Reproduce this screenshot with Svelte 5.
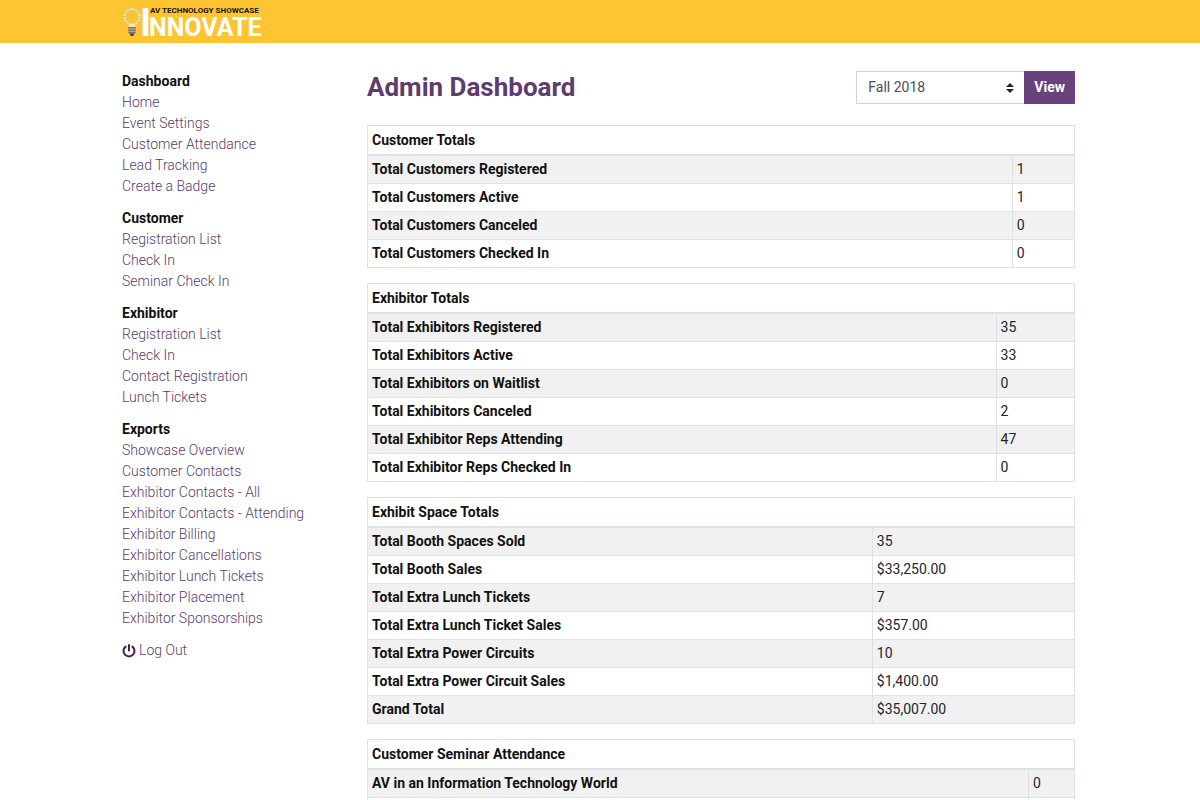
<script>
  const groups = [
    { title: 'Dashboard', links: ['Home', 'Event Settings', 'Customer Attendance', 'Lead Tracking', 'Create a Badge'] },
    { title: 'Customer', links: ['Registration List', 'Check In', 'Seminar Check In'] },
    { title: 'Exhibitor', links: ['Registration List', 'Check In', 'Contact Registration', 'Lunch Tickets'] },
    {
      title: 'Exports',
      links: [
        'Showcase Overview',
        'Customer Contacts',
        'Exhibitor Contacts - All',
        'Exhibitor Contacts - Attending',
        'Exhibitor Billing',
        'Exhibitor Cancellations',
        'Exhibitor Lunch Tickets',
        'Exhibitor Placement',
        'Exhibitor Sponsorships'
      ]
    }
  ];

  // share: width of the label column, in percent of the table
  const tables = [
    {
      title: 'Customer Totals',
      share: 91.2,
      rows: [
        ['Total Customers Registered', '1'],
        ['Total Customers Active', '1'],
        ['Total Customers Canceled', '0'],
        ['Total Customers Checked In', '0']
      ]
    },
    {
      title: 'Exhibitor Totals',
      share: 88.9,
      rows: [
        ['Total Exhibitors Registered', '35'],
        ['Total Exhibitors Active', '33'],
        ['Total Exhibitors on Waitlist', '0'],
        ['Total Exhibitors Canceled', '2'],
        ['Total Exhibitor Reps Attending', '47'],
        ['Total Exhibitor Reps Checked In', '0']
      ]
    },
    {
      title: 'Exhibit Space Totals',
      share: 71.4,
      rows: [
        ['Total Booth Spaces Sold', '35'],
        ['Total Booth Sales', '$33,250.00'],
        ['Total Extra Lunch Tickets', '7'],
        ['Total Extra Lunch Ticket Sales', '$357.00'],
        ['Total Extra Power Circuits', '10'],
        ['Total Extra Power Circuit Sales', '$1,400.00'],
        ['Grand Total', '$35,007.00']
      ]
    },
    {
      title: 'Customer Seminar Attendance',
      share: 93.5,
      rows: [
        ['AV in an Information Technology World', '0'],
        ['', '']
      ]
    }
  ];
</script>

<header class="banner">
  <div class="container">
    <a class="logo" href="#home">
      <svg class="bulb" viewBox="0 0 20 32" aria-hidden="true">
        <circle cx="10" cy="10.500" r="7.500" fill="none" stroke="#e0b64a" stroke-width="3" />
        <circle cx="10" cy="10.500" r="7.500" fill="none" stroke="#fff3c4" stroke-width="2.200" stroke-dasharray="2 .95" />
        <path d="M6.500 18h7l-.6 4H7.100z" fill="#fbe7a6" />
        <path d="M6.300 21h7.400v5.500l-2 2.500H8.300l-2-2.500z" fill="#777267" />
        <path d="M6.300 23h7.400M6.300 25.300h7.400" stroke="#c9c4b4" stroke-width=".8" />
        <path d="M8.500 28h3v2h-3z" fill="#403b31" />
      </svg>
      <svg class="wordmark" viewBox="0 0 120 32" role="img" aria-label="AV Technology Showcase Innovate">
        <text class="initial" x="-2" y="30">I</text>
        <text class="tagline" x="8" y="7">AV TECHNOLOGY SHOWCASE</text>
        <text class="name" x="7" y="30">NNOVATE</text>
      </svg>
    </a>
  </div>
</header>

<div class="container body">
  <nav class="sidebar" aria-label="Admin">
    {#each groups as group}
      <section>
        <h2>{group.title}</h2>
        <ul>
          {#each group.links as link}
            <li><a href="#{link.toLowerCase().replaceAll(' ', '-')}">{link}</a></li>
          {/each}
        </ul>
      </section>
    {/each}
    <a class="logout" href="#logout">
      <svg viewBox="0 0 14 14" aria-hidden="true">
        <path d="M3.600 2.600A5.500 5.500 0 1 0 10.400 2.600M7 1v5.500" fill="none" stroke="currentColor" stroke-width="2" stroke-linecap="round" />
      </svg>
      Log Out
    </a>
  </nav>

  <main>
    <div class="heading">
      <h1>Admin Dashboard</h1>
      <form class="picker" onsubmit={(e) => e.preventDefault()}>
        <div class="select">
          <select aria-label="Event">
            <option>Fall 2018</option>
          </select>
          <svg viewBox="0 0 8 10" aria-hidden="true"><path d="M4 0l4 4H0zM4 10L0 6h8z" fill="#212529" /></svg>
        </div>
        <button type="submit">View</button>
      </form>
    </div>

    {#each tables as table}
      <table>
        <colgroup>
          <col style="width: {table.share}%" />
          <col />
        </colgroup>
        <thead>
          <tr><th colspan="2">{table.title}</th></tr>
        </thead>
        <tbody>
          {#each table.rows as [label, value]}
            <tr>
              <th scope="row">{label}</th>
              <td>{value}</td>
            </tr>
          {/each}
        </tbody>
      </table>
    {/each}
  </main>
</div>

<style>
  :global(body) {
    background: #fff;
    color: #212529;
    font-family: Roboto, sans-serif;
    font-size: 14px;
    line-height: 21px;
  }

  .container {
    box-sizing: border-box;
    max-width: 956px;
    margin: 0 auto;
    padding-right: 3px;
  }

  a {
    color: #5b3a6b;
    text-decoration: none;
  }

  .banner {
    background: #ffc431;
    padding: 6px 0 5px;
  }

  .logo {
    display: flex;
    width: max-content;
  }

  .bulb {
    width: 20px;
    height: 32px;
  }

  .wordmark {
    width: 120px;
    height: 32px;
    overflow: visible;
  }

  .wordmark text {
    font-weight: 700;
  }

  .tagline {
    fill: #17140c;
    font-size: 8px;
  }

  .name {
    fill: #fff;
    font-size: 25px;
  }

  .initial {
    fill: #fff;
    font-size: 38px;
  }

  .body {
    display: flex;
    gap: 24px;
    padding-top: 28px;
  }

  .sidebar {
    flex: 0 0 221px;
    font-weight: 300;
  }

  section {
    margin-bottom: 11px;
  }

  h2 {
    margin: 0;
    color: #111;
    font-size: 14px;
    font-weight: 700;
    line-height: 21px;
  }

  ul {
    margin: 0;
    padding: 0;
    list-style: none;
  }

  .logout {
    display: flex;
    align-items: center;
    gap: 3px;
  }

  .logout svg {
    width: 14px;
    height: 14px;
    color: #43235a;
  }

  main {
    flex: 1;
    min-width: 0;
  }

  .heading {
    display: flex;
    align-items: center;
    justify-content: space-between;
    margin-bottom: 21px;
  }

  h1 {
    margin: 0;
    color: #5e3b70;
    font-size: 26px;
    font-weight: 700;
    line-height: 33px;
  }

  .picker {
    display: flex;
  }

  .select {
    display: grid;
    align-items: center;
    width: 168px;
  }

  .select select,
  .select svg {
    grid-area: 1 / 1;
  }

  .select svg {
    justify-self: end;
    width: 8px;
    height: 10px;
    margin-right: 10px;
    pointer-events: none;
  }

  select {
    appearance: none;
    box-sizing: border-box;
    width: 100%;
    height: 33px;
    padding: 0 24px 0 11px;
    border: 1px solid #ced4da;
    border-right: 0;
    border-radius: 0;
    background: #fff;
    color: #495057;
    font: inherit;
  }

  button {
    height: 33px;
    padding: 0 10px;
    border: 0;
    background: #68427b;
    color: #fff;
    font: inherit;
    font-weight: 700;
  }

  table {
    width: 100%;
    margin-bottom: 15px;
    border-collapse: collapse;
    table-layout: fixed;
  }

  th,
  td {
    height: 27px;
    padding: 0 4px;
    border: 1px solid #dee2e6;
    text-align: left;
    line-height: 21px;
  }

  th {
    color: #111;
    font-weight: 700;
  }

  thead th {
    height: 28px;
    border-bottom-width: 2px;
  }

  tbody tr:nth-child(odd) {
    background: #f1f1f1;
  }
</style>
